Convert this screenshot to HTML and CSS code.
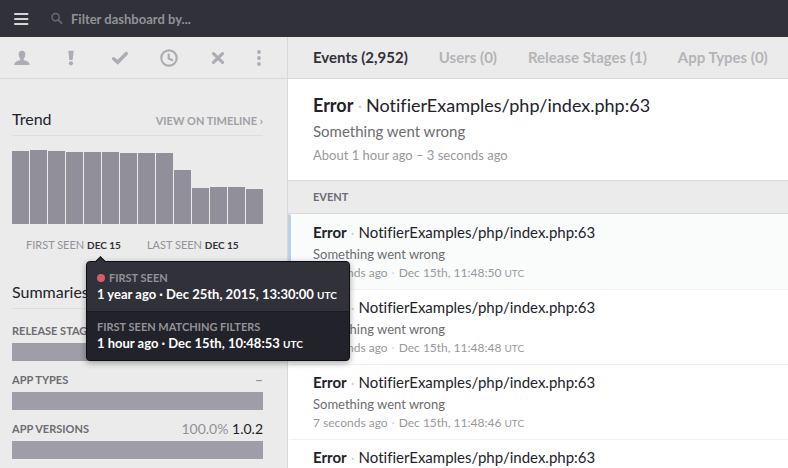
FILE: index.html
```html
<!DOCTYPE html>
<html lang="en">
<head>
<meta charset="utf-8">
<title>Error dashboard</title>
<link rel="stylesheet" href="styles.css">
</head>
<body>
<header class="topbar">
  <button class="menu" type="button" aria-label="Menu">
    <svg width="16" height="14" viewBox="0 0 16 14"><path d="M2 2h12.500M2 7h12.500M2 12h12.500" stroke="#d3d6d5" stroke-width="2" stroke-linecap="round"/></svg>
  </button>
  <label class="search">
    <svg width="12" height="13" viewBox="0 0 13 13" fill="none" stroke="#69696f" stroke-width="1.600"><circle cx="5" cy="5" r="3.900"/><path d="M8 8l4 4" stroke-width="2"/></svg>
    <input class="search-input" type="text" placeholder="Filter dashboard by..." aria-label="Filter dashboard">
  </label>
</header>
<div class="layout">
  <aside class="sidebar">
    <div class="toolbar">
      <button type="button" aria-label="Assign"><svg width="16" height="16" viewBox="0 0 16 16" fill="#acacb4"><path d="M8 .8c2.200 0 3.300 1.300 3.300 3.400 0 2-.6 3.200-1.400 4.200-.4.500-.3 1.600.3 1.900 2 1 5.200.8 5.400 4.700H.4C.6 11.100 3.800 11.300 5.800 10.300c.6-.3.7-1.400.3-1.900C5.300 7.400 4.700 6.200 4.700 4.200 4.700 2.100 5.800.8 8 .8z"/></svg></button>
      <button type="button" aria-label="Severity"><svg width="6" height="16" viewBox="0 0 6 16" fill="#acacb4"><path d="M.3.800h5.400L4.600 10H1.400z"/><circle cx="3" cy="13.300" r="2.100"/></svg></button>
      <button type="button" aria-label="Resolve"><svg width="18" height="16" viewBox="0 0 18 16" fill="none" stroke="#acacb4" stroke-width="3.400" stroke-linecap="round"><path d="M2.700 8.700L6.700 12.300 15.300 3.500"/></svg></button>
      <button type="button" aria-label="Snooze"><svg width="18" height="18" viewBox="0 0 18 18" fill="none" stroke="#acacb4" stroke-width="2.200"><circle cx="9" cy="9" r="7.700"/><path d="M8.700 4.500v5l4.300 2"/></svg></button>
      <button type="button" aria-label="Ignore"><svg width="14" height="14" viewBox="0 0 14 14" fill="none" stroke="#acacb4" stroke-width="3.200" stroke-linecap="round"><path d="M2.500 2.700l9 8.600M11.500 2.700l-9 8.600"/></svg></button>
      <button type="button" aria-label="More"><svg width="4" height="16" viewBox="0 0 4 16" fill="#acacb4"><circle cx="2" cy="2" r="1.900"/><circle cx="2" cy="8" r="1.900"/><circle cx="2" cy="14" r="1.900"/></svg></button>
    </div>
    <section class="panel">
      <div class="panel-head"><h2>Trend</h2><a class="timeline" href="#">VIEW ON TIMELINE ›</a></div>
      <div class="chart" role="img" aria-label="Events over time">
        <i style="height:73px"></i><i style="height:74px"></i><i style="height:73px"></i><i style="height:72px"></i><i style="height:72px"></i><i style="height:72px"></i><i style="height:71px"></i><i style="height:71px"></i><i style="height:71px"></i><i style="height:54px"></i><i style="height:36px"></i><i style="height:37px"></i><i style="height:37px"></i><i style="height:35px"></i>
      </div>
      <div class="seen">
        <div class="seen-item">FIRST SEEN <b>DEC 15</b>
          <div class="tooltip" role="tooltip">
            <div class="tip-part">
              <div class="tip-label"><span class="dot"></span>FIRST SEEN</div>
              <div class="tip-date">1 year ago · Dec 25th, 2015, 13:30:00 <small>UTC</small></div>
            </div>
            <div class="tip-part tip-dark">
              <div class="tip-label">FIRST SEEN MATCHING FILTERS</div>
              <div class="tip-date">1 hour ago · Dec 15th, 10:48:53 <small>UTC</small></div>
            </div>
          </div>
        </div>
        <div class="seen-item">LAST SEEN <b>DEC 15</b></div>
      </div>
    </section>
    <section class="panel summaries">
      <div class="panel-head"><h2>Summaries</h2></div>
      <div class="summary"><div class="summary-head"><h3>RELEASE STAGES</h3></div><div class="meter"></div></div>
      <div class="summary"><div class="summary-head"><h3>APP TYPES</h3><b class="share">–</b></div><div class="meter"></div></div>
      <div class="summary"><div class="summary-head"><h3>APP VERSIONS</h3><span class="share">100.0% <span class="version">1.0.2</span></span></div><div class="meter"></div></div>
    </section>
  </aside>
  <main class="main">
    <nav class="tabs">
      <a class="active" href="#">Events (2,952)</a><a href="#">Users (0)</a><a href="#">Release Stages (1)</a><a href="#">App Types (0)</a>
    </nav>
    <section class="error-head">
      <h1><b>Error</b><span class="sep">·</span>NotifierExamples/php/index.php:63</h1>
      <p class="message">Something went wrong</p>
      <p class="time">About 1 hour ago – 3 seconds ago</p>
    </section>
    <div class="list-head">EVENT</div>
    <ul class="events">
      <li class="selected"><h4><b>Error</b><span class="sep">·</span>NotifierExamples/php/index.php:63</h4><p class="message">Something went wrong</p><p class="time">3 seconds ago<span class="sep">·</span>Dec 15th, 11:48:50 <small>UTC</small></p></li>
      <li><h4><b>Error</b><span class="sep">·</span>NotifierExamples/php/index.php:63</h4><p class="message">Something went wrong</p><p class="time">5 seconds ago<span class="sep">·</span>Dec 15th, 11:48:48 <small>UTC</small></p></li>
      <li><h4><b>Error</b><span class="sep">·</span>NotifierExamples/php/index.php:63</h4><p class="message">Something went wrong</p><p class="time">7 seconds ago<span class="sep">·</span>Dec 15th, 11:48:46 <small>UTC</small></p></li>
      <li><h4><b>Error</b><span class="sep">·</span>NotifierExamples/php/index.php:63</h4><p class="message">Something went wrong</p><p class="time">9 seconds ago<span class="sep">·</span>Dec 15th, 11:48:44 <small>UTC</small></p></li>
    </ul>
  </main>
</div>
</body>
</html>
```
FILE: styles.css
```css
* { box-sizing: border-box; }
body { margin: 0; height: 100vh; overflow: hidden; display: flex; flex-direction: column; background: #fff; color: #22222b; font-family: Lato, "Noto Sans", sans-serif; font-variant-ligatures: none; }
h1, h2, h3, h4, p, ul { margin: 0; padding: 0; font-weight: 400; }
button { display: flex; justify-content: center; padding: 0; border: 0; background: none; }
a { text-decoration: none; color: inherit; }
svg { display: block; }
small { font-size: 10px; }

.topbar { flex: none; display: flex; align-items: center; gap: 22px; height: 37px; padding: 0 13px; background: #31313a; }
.search { display: flex; flex: 1; align-items: center; gap: 8px; }
.search-input { flex: 1; padding: 0; border: 0; outline: 0; background: none; font: 700 13px/20px Lato, sans-serif; color: #fff; }
.search-input::placeholder { color: #929297; opacity: 1; }

.layout { flex: 1; display: flex; min-height: 0; }
.sidebar { flex: none; width: 288px; background: #ebebeb; border-right: 1px solid #d9d9db; }
.toolbar { display: flex; align-items: center; justify-content: space-between; height: 42px; padding: 0 26px 0 12px; border-bottom: 1px solid #d9d9db; }
.toolbar button { width: 20px; }
.toolbar button:last-child { width: 4px; }
.panel { padding: 28px 24px 0 12px; }
.panel-head { display: flex; align-items: baseline; justify-content: space-between; padding-bottom: 4px; border-bottom: 1px solid #dedee0; }
h2 { font-size: 16px; line-height: 24px; }
.timeline { font-size: 11px; font-weight: 700; color: #a0a0a5; }
.chart { display: grid; grid-template-columns: repeat(14, 1fr); gap: 1px; align-items: end; height: 88px; }
.chart i { background: #918f99; }
.seen { display: flex; gap: 26px; padding: 11px 0 0 14px; font-size: 11px; line-height: 20px; color: #929297; white-space: nowrap; }
.seen b { font-size: 10px; color: #31313a; }
.seen-item { position: relative; }

.tooltip { position: absolute; z-index: 2; left: 60px; top: 26px; width: 264px; border: 1px solid #0e0e14; border-radius: 4px; background: #22222a; box-shadow: 0 2px 6px rgba(0, 0, 0, .35); }
.tooltip::before { content: ""; position: absolute; left: 9px; top: -4px; width: 8px; height: 8px; background: #31313a; border: solid #0e0e14; border-width: 1px 0 0 1px; transform: rotate(45deg); }
.tip-part { position: relative; padding: 8px 11px 8px 10px; line-height: 16px; border-radius: 3px 3px 0 0; background: #31313a; }
.tip-dark { padding-top: 7px; border-top: 1px solid #1b1b22; border-radius: 0 0 3px 3px; background: #22222a; }
.tip-label { display: flex; align-items: center; gap: 4px; font-size: 11px; font-weight: 700; color: #929297; }
.dot { width: 8px; height: 8px; border-radius: 50%; background: #dc5b6b; }
.tip-date { font-size: 13px; font-weight: 700; color: #fff; }

.summaries { padding-top: 25px; }
.summary { padding-top: 7px; }
.panel-head + .summary { padding-top: 10px; }
.summary-head { display: flex; justify-content: space-between; line-height: 24px; }
h3 { font-size: 11px; font-weight: 700; color: #6c6c72; }
.share { font-size: 14px; color: #929297; }
.version { color: #22222b; }
.meter { height: 18px; background: #9f9ea8; }

.main { flex: 1; min-width: 0; }
.tabs { display: flex; gap: 31px; height: 42px; padding-left: 25px; background: #ebebeb; border-bottom: 1px solid #d9d9db; font-size: 15px; font-weight: 700; line-height: 41px; color: #b4b4b8; white-space: nowrap; }
.tabs .active { color: #31313a; }
.sep { margin: 0 4px; color: #d2d2d6; }
.error-head { padding: 12px 25px 13px; border-bottom: 1px solid #d9d9db; }
h1 { font-size: 18px; line-height: 28px; }
.error-head p { line-height: 24px; }
.message { font-size: 15px; color: #6c6c72; }
.time { font-size: 13px; color: #98989d; }
.list-head { padding-left: 25px; background: #ebebeb; border-bottom: 1px solid #d9d9db; font-size: 11px; font-weight: 700; line-height: 32px; color: #6c6c72; }
.events { list-style: none; }
.events li { padding: 5px 25px 7px 22px; border-top: 1px solid #f0f1f1; border-left: 3px solid transparent; }
.events .selected { border-top-color: #fafcfc; border-left-color: #b5d3ea; background: #fafcfc; }
h4 { font-size: 15px; line-height: 24px; }
.events .message { font-size: 13px; line-height: 20px; }
.events .time { font-size: 12px; line-height: 18px; }
```
